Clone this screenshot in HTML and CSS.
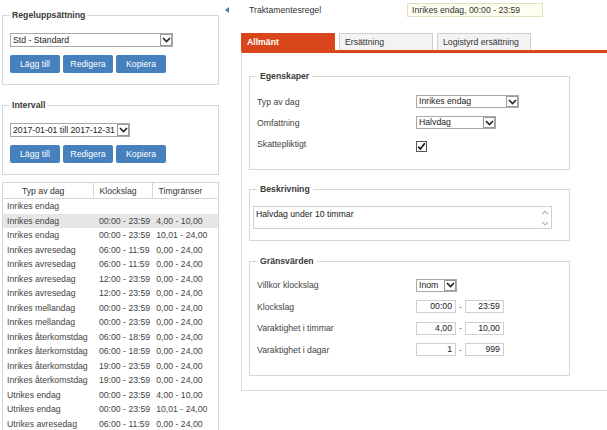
FILE: index.html
```html
<!DOCTYPE html>
<html lang="sv">
<head>
<meta charset="utf-8">
<title>Traktamentesregel</title>
<link rel="stylesheet" href="styles.css">
</head>
<body>
<div class="page">
  <aside class="sidebar">
    <fieldset class="box box-first">
      <legend>Regeluppsättning</legend>
      <div class="select sel-ruleset">
        <span class="select-text">Std - Standard</span>
        <span class="select-arrow"><svg width="9" height="6" viewBox="0 0 9 6"><polyline points="1,1 4.5,4.5 8,1" fill="none" stroke="#222" stroke-width="1.6"/></svg></span>
      </div>
      <div class="btn-row">
        <button class="btn">Lägg till</button>
        <button class="btn">Redigera</button>
        <button class="btn">Kopiera</button>
      </div>
    </fieldset>

    <fieldset class="box box-interval">
      <legend>Intervall</legend>
      <div class="select sel-interval">
        <span class="select-text">2017-01-01 till 2017-12-31</span>
        <span class="select-arrow"><svg width="9" height="6" viewBox="0 0 9 6"><polyline points="1,1 4.5,4.5 8,1" fill="none" stroke="#222" stroke-width="1.6"/></svg></span>
      </div>
      <div class="btn-row">
        <button class="btn">Lägg till</button>
        <button class="btn">Redigera</button>
        <button class="btn">Kopiera</button>
      </div>
    </fieldset>

    <table class="rules">
      <colgroup>
        <col class="c-type">
        <col class="c-time">
        <col class="c-limit">
      </colgroup>
      <thead>
        <tr><th>Typ av dag</th><th>Klockslag</th><th>Timgränser</th></tr>
      </thead>
      <tbody>
        <tr><td>Inrikes endag</td><td></td><td></td></tr>
        <tr class="selected"><td>Inrikes endag</td><td>00:00 - 23:59</td><td>4,00 - 10,00</td></tr>
        <tr><td>Inrikes endag</td><td>00:00 - 23:59</td><td>10,01 - 24,00</td></tr>
        <tr><td>Inrikes avresedag</td><td>06:00 - 11:59</td><td>0,00 - 24,00</td></tr>
        <tr><td>Inrikes avresedag</td><td>06:00 - 11:59</td><td>0,00 - 24,00</td></tr>
        <tr><td>Inrikes avresedag</td><td>12:00 - 23:59</td><td>0,00 - 24,00</td></tr>
        <tr><td>Inrikes avresedag</td><td>12:00 - 23:59</td><td>0,00 - 24,00</td></tr>
        <tr><td>Inrikes mellandag</td><td>00:00 - 23:59</td><td>0,00 - 24,00</td></tr>
        <tr><td>Inrikes mellandag</td><td>00:00 - 23:59</td><td>0,00 - 24,00</td></tr>
        <tr><td>Inrikes återkomstdag</td><td>06:00 - 18:59</td><td>0,00 - 24,00</td></tr>
        <tr><td>Inrikes återkomstdag</td><td>06:00 - 18:59</td><td>0,00 - 24,00</td></tr>
        <tr><td>Inrikes återkomstdag</td><td>19:00 - 23:59</td><td>0,00 - 24,00</td></tr>
        <tr><td>Inrikes återkomstdag</td><td>19:00 - 23:59</td><td>0,00 - 24,00</td></tr>
        <tr><td>Utrikes endag</td><td>00:00 - 23:59</td><td>4,00 - 10,00</td></tr>
        <tr><td>Utrikes endag</td><td>00:00 - 23:59</td><td>10,01 - 24,00</td></tr>
        <tr><td>Utrikes avresedag</td><td>06:00 - 11:59</td><td>0,00 - 24,00</td></tr>
      </tbody>
    </table>
  </aside>

  <main class="detail">
    <div class="topbar">
      <span class="collapse"></span>
      <span class="top-label">Traktamentesregel</span>
      <span class="top-value">Inrikes endag, 00:00 - 23:59</span>
    </div>

    <div class="tabs">
      <div class="tab active">Allmänt</div>
      <div class="tab">Ersättning</div>
      <div class="tab">Logistyrd ersättning</div>
    </div>

    <div class="panel">
      <fieldset class="group group-props">
        <legend>Egenskaper</legend>
        <div class="row">
          <span class="row-label">Typ av dag</span>
          <div class="select sel-daytype">
            <span class="select-text">Inrikes endag</span>
            <span class="select-arrow"><svg width="9" height="6" viewBox="0 0 9 6"><polyline points="1,1 4.5,4.5 8,1" fill="none" stroke="#222" stroke-width="1.6"/></svg></span>
          </div>
        </div>
        <div class="row">
          <span class="row-label">Omfattning</span>
          <div class="select sel-scope">
            <span class="select-text">Halvdag</span>
            <span class="select-arrow"><svg width="9" height="6" viewBox="0 0 9 6"><polyline points="1,1 4.5,4.5 8,1" fill="none" stroke="#222" stroke-width="1.6"/></svg></span>
          </div>
        </div>
        <div class="row">
          <span class="row-label">Skattepliktigt</span>
          <span class="checkbox"><svg width="11" height="11" viewBox="0 0 11 11"><rect x="0.5" y="0.5" width="10" height="10" fill="#fff" stroke="#555"/><polyline points="2.3,5.6 4.4,8 8.8,2.2" fill="none" stroke="#111" stroke-width="1.6"/></svg></span>
        </div>
      </fieldset>

      <fieldset class="group group-desc">
        <legend>Beskrivning</legend>
        <div class="textarea">
          <span class="textarea-text">Halvdag under 10 timmar</span>
          <span class="textarea-scroll">
            <svg width="8" height="5" viewBox="0 0 8 5"><polyline points="1,4 4,1 7,4" fill="none" stroke="#b8b8b8" stroke-width="1.1"/></svg>
            <svg width="8" height="5" viewBox="0 0 8 5"><polyline points="1,1 4,4 7,1" fill="none" stroke="#b8b8b8" stroke-width="1.1"/></svg>
          </span>
        </div>
      </fieldset>

      <fieldset class="group group-limits">
        <legend>Gränsvärden</legend>
        <div class="row row-wide">
          <span class="row-label">Villkor klockslag</span>
          <div class="select sel-cond">
            <span class="select-text">Inom</span>
            <span class="select-arrow"><svg width="9" height="6" viewBox="0 0 9 6"><polyline points="1,1 4.5,4.5 8,1" fill="none" stroke="#222" stroke-width="1.6"/></svg></span>
          </div>
        </div>
        <div class="row row-wide">
          <span class="row-label">Klockslag</span>
          <span class="num">00:00</span><span class="dash">-</span><span class="num num-to">23:59</span>
        </div>
        <div class="row row-wide">
          <span class="row-label">Varaktighet i timmar</span>
          <span class="num">4,00</span><span class="dash">-</span><span class="num num-to">10,00</span>
        </div>
        <div class="row row-wide">
          <span class="row-label">Varaktighet i dagar</span>
          <span class="num">1</span><span class="dash">-</span><span class="num num-to">999</span>
        </div>
      </fieldset>
    </div>
  </main>
</div>
</body>
</html>
```

FILE: styles.css
```css
html, body {
  margin: 0;
  padding: 0;
  overflow: hidden;
  background: #fff;
}

body {
  font-family: "Liberation Sans", Arial, sans-serif;
  font-size: 8.7px;
  color: #333;
}

.page {
  display: flex;
  align-items: flex-start;
}

/* ---------- Sidebar ---------- */
.sidebar {
  flex: none;
  width: 217px;
  margin-left: 2px;
}

.box {
  margin: 0;
  min-width: 0;
  padding: 12px 7px 11px 7px;
  border: 1px solid #d6d6d6;
}

.box legend,
.group legend {
  font-weight: bold;
  line-height: 11px;
  padding: 0 2px;
  color: #3a3a3a;
}

.box-first {
  margin-top: 10px;
}

.box-interval {
  margin-top: 15px;
}

.select {
  display: flex;
  box-sizing: border-box;
  height: 14px;
  border: 1px solid #a9a9a9;
  background: #fff;
  color: #222;
}

.select-text {
  flex: 1;
  padding-left: 2px;
  line-height: 12px;
  white-space: nowrap;
  overflow: hidden;
}

.select-arrow {
  flex: none;
  width: 12px;
  box-sizing: border-box;
  border: 1px solid #9a9a9a;
  display: flex;
  align-items: center;
  justify-content: center;
  background: #fdfdfd;
}

.sel-ruleset { width: 163px; }
.sel-interval { width: 120px; }

.btn-row {
  display: flex;
  gap: 3px;
  margin-top: 8px;
}

.btn {
  width: 50px;
  height: 18px;
  padding: 0;
  border: 0;
  border-radius: 2px;
  background: #4781bd;
  color: #fff;
  font: inherit;
}

.rules {
  width: 217px;
  margin-top: 7px;
  border-collapse: collapse;
  table-layout: fixed;
  border: 1px solid #d6d6d6;
  color: #444;
}

.c-type { width: 91px; }
.c-time { width: 58px; }
.c-limit { width: 66px; }

.rules th {
  height: 15px;
  padding: 0 10px 0 0;
  font-weight: normal;
  text-align: center;
  border: 1px solid #d6d6d6;
  color: #333;
}

.rules td {
  padding: 0 0 0 4px;
  line-height: 14.5px;
  white-space: nowrap;
  overflow: hidden;
}

.rules td:nth-child(2) {
  padding-left: 5px;
}

.rules tr.selected td {
  background: #e6e6e6;
}

/* ---------- Detail ---------- */
.detail {
  flex: none;
  width: 386px;
  margin-left: 2px;
}

.topbar {
  display: flex;
  align-items: center;
  height: 14px;
  padding: 3px 0 0 4px;
}

.collapse {
  width: 0;
  height: 0;
  border-top: 3px solid transparent;
  border-bottom: 3px solid transparent;
  border-right: 4px solid #3f7cb8;
}

.top-label {
  width: 158px;
  margin-left: 20px;
}

.top-value {
  box-sizing: border-box;
  width: 136px;
  height: 14px;
  line-height: 12px;
  padding-left: 4px;
  border: 1px solid #e2dfc4;
  background: #fffff0;
}

.tabs {
  display: flex;
  gap: 4px;
  margin: 16px 0 0 20px;
}

.tab {
  box-sizing: border-box;
  width: 94px;
  height: 17px;
  line-height: 16px;
  padding-left: 5px;
  border: 1px solid #cfcfcf;
  border-bottom: 0;
  background: #f3f3f3;
  color: #333;
}

.tab.active {
  background: #d9461b;
  border-color: #d9461b;
  color: #fff;
  font-weight: bold;
}

.panel {
  width: 380px;
  margin-left: 20px;
  padding: 18px 0 14px 7px;
  border-top: 3px solid #d9461b;
  border-left: 1px solid #dcdcdc;
  border-bottom: 1px solid #dcdcdc;
}

.group {
  box-sizing: border-box;
  width: 321px;
  margin: 0;
  min-width: 0;
  border: 1px solid #d6d6d6;
}

.group legend {
  padding: 0 3px;
}

.group-props {
  padding: 9px 7px 15px 7px;
}

.group-desc {
  margin-top: 13.5px;
  padding: 11px 7px 11px 3px;
}

.group-desc legend {
  margin-left: 4px;
}

.group-limits {
  margin-top: 15px;
  padding: 8px 7px 14px 7px;
}

.row {
  display: flex;
  align-items: center;
  height: 21px;
}

.row-wide {
  height: 21.5px;
}

.row-label {
  flex: none;
  width: 159px;
  color: #444;
}

.row .select {
  height: 13px;
}

.row .select-text {
  line-height: 11px;
}

.sel-daytype { width: 103px; }
.sel-scope { width: 80px; }
.sel-cond { width: 41px; }

.checkbox {
  display: flex;
  margin-top: 5px;
}

.textarea {
  display: flex;
  box-sizing: border-box;
  width: 299px;
  height: 23px;
  border: 1px solid #cfcfcf;
}

.textarea-text {
  flex: 1;
  padding: 2px 0 0 2px;
  line-height: 11px;
  color: #222;
}

.textarea-scroll {
  flex: none;
  width: 13px;
  display: flex;
  flex-direction: column;
  justify-content: space-between;
  align-items: center;
  padding: 3px 0 2px;
}

.num {
  box-sizing: border-box;
  width: 40px;
  height: 13px;
  line-height: 11px;
  padding-right: 3px;
  text-align: right;
  border: 1px solid #d0d0d0;
  color: #222;
}

.num-to {
  width: 39px;
}

.dash {
  margin: 0 3px;
  color: #666;
}
```
